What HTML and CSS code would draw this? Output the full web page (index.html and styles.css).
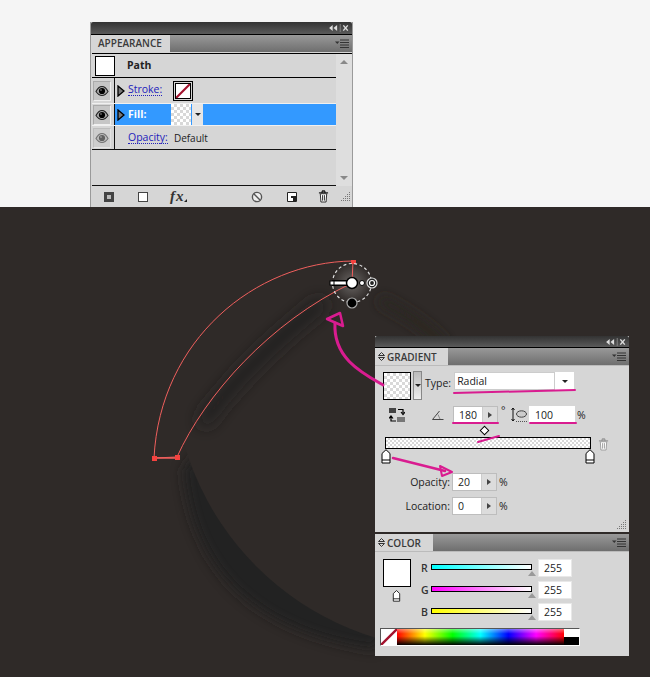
FILE: index.html
```html
<!DOCTYPE html>
<html lang="en">

<head>
    <meta charset="UTF-8">
    <meta name="viewport" content="width=device-width, initial-scale=1.0">
    <title>Appearance and gradient panels</title>
    <link rel="stylesheet" href="styles.css">
</head>

<body>
    <svg class="defs" width="0" height="0">
        <defs>
            <symbol id="eye" viewBox="0 0 14 12">
                <path d="M1 6.5 C3 2.5 5 1.5 7 1.5 C9 1.5 11 2.5 13 6.5 C11 9.5 9 10.5 7 10.5 C5 10.5 3 9.5 1 6.5Z" fill="#a8a8a8" stroke="#222" stroke-width="1.1" />
                <circle cx="7" cy="6" r="3.1" fill="#000" />
                <circle cx="6" cy="5" r="0.8" fill="#999" />
            </symbol>
            <symbol id="twirl" viewBox="0 0 8 12">
                <path d="M1 1 L7 6 L1 11Z" fill="#777" stroke="#000" stroke-width="1.3" />
            </symbol>
            <symbol id="collapse" viewBox="0 0 22 9">
                <path d="M5 1 L1 4.5 L5 8Z M10 1 L6 4.5 L10 8Z" fill="#ddd" />
                <path d="M13.5 0 V9" stroke="#888" />
                <path d="M17 1.5 L22 7.5 M22 1.5 L17 7.5" stroke="#ddd" stroke-width="1.6" />
            </symbol>
            <symbol id="menu" viewBox="0 0 14 9">
                <path d="M0 2.5 H4.5 L2.25 5Z" fill="#333" />
                <path d="M5 1 H14 M5 3.5 H14 M5 6 H14 M5 8.5 H14" stroke="#333" />
            </symbol>
            <symbol id="grip" viewBox="0 0 12 12">
                <path d="M10 1h1v1h-1z M8 3h1v1h-1z M10 3h1v1h-1z M6 5h1v1h-1z M8 5h1v1h-1z M10 5h1v1h-1z M4 7h1v1h-1z M6 7h1v1h-1z M8 7h1v1h-1z M10 7h1v1h-1z M2 9h1v1h-1z M4 9h1v1h-1z M6 9h1v1h-1z M8 9h1v1h-1z M10 9h1v1h-1z" fill="#777" />
            </symbol>
            <symbol id="trash" viewBox="0 0 12 14">
                <path d="M1 3 H11 M4 3 L5 1 H7 L8 3" fill="none" stroke="currentColor" stroke-width="1.5" />
                <path d="M2.5 4 L3.2 13 H8.8 L9.5 4Z" fill="#fff" stroke="currentColor" />
                <path d="M5 5.5 V11.5 M7 5.5 V11.5" stroke="currentColor" />
            </symbol>
            <symbol id="stop" viewBox="0 0 10 15">
                <path d="M5 .7 L9 4.5 V14 H1 V4.5Z" fill="#fff" stroke="#000" />
                <path d="M1 11 H9" stroke="#000" />
            </symbol>
            <symbol id="updown" viewBox="0 0 7 9">
                <path d="M3.5 .5 L6.5 3.5 H.5Z M3.5 8.5 L.5 5.5 H6.5Z" fill="none" stroke="#333" />
            </symbol>
            <symbol id="nofill" viewBox="0 0 10 10" preserveAspectRatio="none">
                <path d="M0 10 L10 0" stroke="#a3122e" stroke-width="1.5" />
            </symbol>
        </defs>
    </svg>

    <div class="top-strip">
        <section class="panel appearance">
            <div class="title-bar">
                <svg class="collapse-icon"><use href="#collapse" /></svg>
            </div>
            <div class="tab-row">
                <div class="tab">APPEARANCE</div>
                <svg class="menu-icon"><use href="#menu" /></svg>
            </div>
            <div class="app-body">
                <div class="app-list">
                    <div class="app-row path-row">
                        <div class="path-swatch"></div>
                        <strong class="path-name">Path</strong>
                    </div>
                    <div class="app-row attr-row stroke-row">
                        <div class="eye-cell"><svg class="eye"><use href="#eye" /></svg></div>
                        <svg class="twirl"><use href="#twirl" /></svg>
                        <a class="attr-link">Stroke:</a>
                        <div class="stroke-swatch"><svg><use href="#nofill" /></svg></div>
                    </div>
                    <div class="app-row attr-row fill-row">
                        <div class="eye-cell"><svg class="eye"><use href="#eye" /></svg></div>
                        <svg class="twirl"><use href="#twirl" /></svg>
                        <a class="attr-link fill-link">Fill:</a>
                        <div class="checker fill-swatch"></div>
                        <div class="fill-drop"><i class="down"></i></div>
                    </div>
                    <div class="app-row attr-row opacity-row">
                        <div class="eye-cell"><svg class="eye dim"><use href="#eye" /></svg></div>
                        <a class="attr-link no-twirl">Opacity:</a>
                        <span class="attr-value">Default</span>
                    </div>
                    <div class="app-empty"></div>
                </div>
                <div class="scroll">
                    <i class="scroll-up"></i>
                    <i class="scroll-down"></i>
                </div>
            </div>
            <div class="app-footer">
                <span class="tool-new"><i></i></span>
                <span class="tool-square"></span>
                <span class="tool-fx">fx<i></i></span>
                <svg class="tool-none" viewBox="0 0 12 12">
                    <circle cx="6" cy="6" r="4.6" fill="#eee" stroke="#555" stroke-width="1.4" />
                    <path d="M3 3 L9 9" stroke="#555" stroke-width="1.4" />
                </svg>
                <svg class="tool-dup" viewBox="0 0 10 10">
                    <path d="M.5 .5 H9.5 V9.500 H.5Z" fill="#fff" stroke="#222" />
                    <path d="M4 4 H9 V9 H6 V6 H4Z" fill="#222" />
                </svg>
                <svg class="tool-trash"><use href="#trash" /></svg>
                <svg class="grip"><use href="#grip" /></svg>
            </div>
        </section>
    </div>

    <div class="stage">
        <svg class="artwork" width="650" height="470" viewBox="0 207 650 470">
            <defs>
                <filter id="blur8" filterUnits="userSpaceOnUse" x="100" y="207" width="500" height="470">
                    <feGaussianBlur stdDeviation="8" />
                </filter>
                <filter id="blur6" filterUnits="userSpaceOnUse" x="100" y="207" width="500" height="470">
                    <feGaussianBlur stdDeviation="6" />
                </filter>
                <mask id="outside" maskUnits="userSpaceOnUse" x="0" y="207" width="650" height="470">
                    <rect x="0" y="207" width="650" height="470" fill="#fff" />
                    <circle cx="458" cy="365" r="285" fill="#000" />
                </mask>
                <radialGradient id="handle" cx="50%" cy="50%" r="50%">
                    <stop offset="0" stop-color="#6a6664" />
                    <stop offset="1" stop-color="#2f2a28" />
                </radialGradient>
            </defs>

            <!-- soft shadows behind the path -->
            <g mask="url(#outside)">
                <path d="M183 470 Q197 624 375 650 L400 600 L200 450Z" fill="#242120" filter="url(#blur6)" />
            </g>
            <path d="M205 420 C230 385 275 340 320 305" fill="none" stroke="#242120" stroke-width="13" stroke-linecap="round" filter="url(#blur8)" />
            <path d="M380 300 C405 312 428 328 445 346" fill="none" stroke="#292524" stroke-width="10" filter="url(#blur6)" />

            <circle cx="352" cy="283" r="20" fill="url(#handle)" />

            <path d="M154 458 C160 340 255 262 353 261 L352 283 C270 322 205 395 177 457Z" fill="none" stroke="#ef5f5d" stroke-width="1" />
            <path d="M154 458 H177" fill="none" stroke="#ef5f5d" stroke-width="1.500" />
            <rect x="152" y="456" width="5" height="5" fill="#f5423f" />
            <rect x="175" y="455" width="5" height="5" fill="#f5423f" />
            <rect x="351" y="260" width="5" height="4" fill="#f5423f" />

            <circle cx="352" cy="283" r="19.500" fill="none" stroke="#ddd" stroke-width="1.200" stroke-dasharray="3 2.500" />
            <rect x="332" y="280" width="20" height="6" fill="#000" />
            <rect x="332" y="281.500" width="20" height="3" fill="#fff" />
            <rect x="330" y="281" width="4" height="4" fill="#fff" stroke="#000" />
            <circle cx="352" cy="283" r="5.500" fill="#fff" stroke="#000" stroke-width="1.500" />
            <circle cx="362" cy="283" r="2.500" fill="#fff" stroke="#000" />
            <circle cx="372" cy="283" r="5" fill="#222" stroke="#ddd" stroke-width="1.200" />
            <circle cx="372" cy="283" r="2.500" fill="#222" stroke="#fff" stroke-width="1.200" />
            <circle cx="352" cy="303" r="5" fill="#000" stroke="#aaa" stroke-width="1.200" />
        </svg>

        <section class="panel gradient">
            <div class="title-bar">
                <svg class="collapse-icon"><use href="#collapse" /></svg>
            </div>
            <div class="tab-row">
                <div class="tab"><svg class="updown"><use href="#updown" /></svg>GRADIENT</div>
                <svg class="menu-icon"><use href="#menu" /></svg>
            </div>
            <div class="grad-body">
                <div class="grad-type">
                    <div class="checker big-swatch"></div>
                    <div class="swatch-drop"><i class="down"></i></div>
                    <label class="type-label">Type:</label>
                    <div class="select">
                        <span class="select-text">Radial</span>
                        <span class="select-arrow"><i class="down"></i></span>
                    </div>
                </div>
                <div class="grad-angle">
                    <svg class="swap" viewBox="0 0 16 15">
                        <rect x="0" y="0" width="7" height="5" fill="#444" />
                        <path d="M9 1.500 H14 V5 M12 4 L14 6.500 L16 4" fill="none" stroke="#000" stroke-width="1.200" />
                        <rect x="8" y="9" width="8" height="5" fill="#777" />
                        <path d="M7 13 H2 V9 M0 10.500 L2 8 L4 10.500" fill="none" stroke="#000" stroke-width="1.200" />
                    </svg>
                    <svg class="angle" viewBox="0 0 12 10">
                        <path d="M.5 9.500 H11.500 M.5 9.500 L7.500 1" fill="none" stroke="#444" />
                        <path d="M6 4.500 L8 9" stroke="#888" fill="none" />
                    </svg>
                    <div class="num with-step"><span>180</span><em class="step"><i></i></em></div>
                    <span class="degree">°</span>
                    <svg class="aspect" viewBox="0 0 16 16">
                        <path d="M2 1 V14 M.5 3 L2 1 L3.500 3 M.5 12 L2 14 L3.500 12" fill="none" stroke="#111" />
                        <ellipse cx="10.500" cy="7" rx="5" ry="3.200" fill="#ccc" stroke="#444" />
                        <path d="M5 14.500 H16" stroke="#555" stroke-dasharray="1 1" />
                    </svg>
                    <div class="num wide"><span>100</span></div>
                    <span class="unit">%</span>
                </div>
                <div class="midpoint"><i></i></div>
                <div class="grad-bar-row">
                    <div class="checker grad-bar"></div>
                    <svg class="bar-trash"><use href="#trash" /></svg>
                </div>
                <div class="stops">
                    <svg class="stop-icon"><use href="#stop" /></svg>
                    <svg class="stop-icon"><use href="#stop" /></svg>
                </div>
                <div class="field-row">
                    <label>Opacity:</label>
                    <div class="num with-step"><span>20</span><em class="step"><i></i></em></div>
                    <span class="unit">%</span>
                </div>
                <div class="field-row">
                    <label>Location:</label>
                    <div class="num with-step"><span>0</span><em class="step"><i></i></em></div>
                    <span class="unit">%</span>
                </div>
                <svg class="grip corner"><use href="#grip" /></svg>
            </div>
        </section>

        <section class="panel color">
            <div class="tab-row">
                <div class="tab"><svg class="updown"><use href="#updown" /></svg>COLOR</div>
                <svg class="menu-icon"><use href="#menu" /></svg>
            </div>
            <div class="color-body">
                <div class="color-top">
                    <div class="color-swatch-col">
                        <div class="color-swatch"></div>
                        <svg class="stop-icon"><use href="#stop" /></svg>
                    </div>
                    <div class="sliders">
                        <div class="slider-row">
                            <label>R</label>
                            <div class="slider"><div class="track track-r"></div><i class="thumb"></i></div>
                            <div class="num small"><span>255</span></div>
                        </div>
                        <div class="slider-row">
                            <label>G</label>
                            <div class="slider"><div class="track track-g"></div><i class="thumb"></i></div>
                            <div class="num small"><span>255</span></div>
                        </div>
                        <div class="slider-row">
                            <label>B</label>
                            <div class="slider"><div class="track track-b"></div><i class="thumb"></i></div>
                            <div class="num small"><span>255</span></div>
                        </div>
                    </div>
                </div>
                <div class="spectrum">
                    <div class="spec-none"><svg><use href="#nofill" /></svg></div>
                    <div class="spec-hues"></div>
                    <div class="spec-bw"></div>
                </div>
            </div>
        </section>
    </div>

    <!-- pink notes drawn over the panels -->
    <svg class="notes" width="650" height="677" viewBox="0 0 650 677">
        <g fill="none" stroke="#d91c90" stroke-linecap="round" stroke-linejoin="round">
            <path d="M383 385 C362 373 333 358 335 323" stroke-width="3" />
            <path d="M327 319 L340 313 L343 326Z" stroke-width="2.500" />
            <path d="M454 393 L575 390" stroke-width="2" />
            <path d="M453 423 L498 423" stroke-width="2" />
            <path d="M530 423 L576 423" stroke-width="2" />
            <path d="M478 442 L499 436" stroke-width="2" />
            <path d="M393 458 L445 471" stroke-width="2.500" />
            <path d="M440 466 L452 472 L442 476Z" stroke-width="2" />
        </g>
    </svg>
</body>

</html>
```

FILE: styles.css
```css
body {
    margin: 0;
    width: 650px;
    height: 677px;
    overflow: hidden;
    position: relative;
    background: #f5f5f5;
    font-family: "Open Sans", "Noto Sans", sans-serif;
    font-size: 10.5px;
    color: #222;
}

svg {
    display: block;
}

.defs {
    position: absolute;
}

.top-strip {
    height: 207px;
    box-sizing: border-box;
    padding: 22px 0 0 90px;
}

.stage {
    position: relative;
    height: 470px;
    background: #2f2a28;
}

.artwork {
    position: absolute;
    top: 0;
    left: 0;
}

.notes {
    position: absolute;
    top: 0;
    left: 0;
    pointer-events: none;
}

/* panels */
.panel {
    background: #d6d6d6;
    box-sizing: border-box;
}

.appearance {
    width: 263px;
    height: 185px;
    border: 1px solid #9a9a9a;
    border-top: none;
    border-bottom: none;
    display: flex;
    flex-direction: column;
}

.gradient {
    position: absolute;
    top: 129px;
    left: 375px;
    width: 254px;
    height: 196px;
    display: flex;
    flex-direction: column;
}

.color {
    position: absolute;
    top: 327px;
    left: 375px;
    width: 254px;
    height: 122px;
}

.title-bar {
    height: 12px;
    flex: none;
    background: linear-gradient(#333, #5a5a5a);
    border-bottom: 1px solid #000;
    border-radius: 2px 2px 0 0;
    display: flex;
    justify-content: flex-end;
    align-items: center;
    padding-right: 3px;
}

.gradient .title-bar {
    height: 11px;
}

.collapse-icon {
    width: 22px;
    height: 8px;
}

.tab-row {
    height: 17px;
    flex: none;
    background: linear-gradient(#999, #6e6e6e);
    display: flex;
    justify-content: space-between;
    align-items: center;
    padding-right: 3px;
}

.tab {
    height: 100%;
    box-sizing: border-box;
    background: #d6d6d6;
    display: flex;
    align-items: center;
    gap: 2px;
    padding-left: 3px;
    font-size: 10px;
    font-weight: 600;
    color: #3a3a3a;
}

.appearance .tab {
    width: 79px;
    padding-left: 7px;
    padding-bottom: 1px;
}

.gradient .tab {
    width: 73px;
}

.color .tab {
    width: 58px;
}

.menu-icon {
    width: 14px;
    height: 9px;
}

.updown {
    width: 7px;
    height: 9px;
}

/* appearance list */
.app-body {
    flex: 1;
    display: flex;
    border-top: 1px solid #000;
    margin-top: 1px;
    margin-left: 1px;
}

.app-list {
    flex: 1;
    display: flex;
    flex-direction: column;
}

.app-row {
    display: flex;
    align-items: center;
    flex: none;
}

.path-row {
    height: 23px;
    border-bottom: 1px solid #000;
}

.path-swatch {
    width: 18px;
    height: 18px;
    margin-left: 3px;
    background: #fff;
    border: 1px solid #000;
}

.path-name {
    margin: -1px 0 0 12px;
    font-weight: 700;
    font-size: 10.5px;
}

.eye-cell {
    width: 23px;
    height: 100%;
    margin-right: 2px;
    box-sizing: border-box;
    border-right: 1px solid #111;
    background: #d6d6d6;
    display: flex;
    align-items: center;
    flex: none;
}

.eye {
    width: 14px;
    height: 14px;
    padding: 2px 1px;
    margin-left: 1px;
    background: #c6c6c6;
    border: 1px solid;
    border-color: #aaa #f0f0f0 #f0f0f0 #aaa;
    box-sizing: content-box;
}

.eye.dim {
    opacity: 0.55;
}

.twirl {
    width: 8px;
    height: 12px;
    flex: none;
    margin-right: 3px;
}

.attr-link {
    color: #2222bb;
    border-bottom: 1px dotted #2222bb;
    line-height: 12px;
    margin-top: -2px;
}

.no-twirl {
    margin-left: 11px;
    margin-top: 0;
}

.stroke-row {
    height: 25px;
    border-bottom: 1px solid #f0f0f0;
}

.stroke-swatch {
    width: 14px;
    height: 14px;
    margin-left: 13px;
    border: 1px solid #000;
    outline: 1px solid #000;
    outline-offset: 1px;
    background: #fff;
}

.stroke-swatch svg {
    width: 14px;
    height: 14px;
}

.fill-row {
    height: 21px;
    background: #3399ff;
    border-bottom: 1px solid #f0f0f0;
}

.fill-link {
    color: #fff;
    border: none;
    font-weight: 700;
    width: 43px;
}

.checker {
    background-color: #fff;
    background-image: conic-gradient(#d8d8d8 25%, #fff 0 50%, #d8d8d8 0 75%, #fff 0);
    background-size: 6px 6px;
}

.fill-swatch {
    width: 20px;
    height: 21px;
}

.fill-drop {
    width: 11px;
    height: 21px;
    margin-left: 1px;
    background: #e6e6e6;
    display: flex;
    align-items: center;
    justify-content: center;
}

.down {
    display: block;
    width: 0;
    height: 0;
    border-top: 3px solid #222;
    border-left: 3.500px solid transparent;
    border-right: 3.500px solid transparent;
}

.opacity-row {
    height: 23px;
    border-bottom: 1px solid #111;
}

.attr-value {
    margin-left: 6px;
    font-size: 10px;
}

.app-empty {
    flex: 1;
    border-bottom: 1px solid #111;
}

.scroll {
    width: 16px;
    background: #dedede;
    position: relative;
}

.scroll-up,
.scroll-down {
    position: absolute;
    left: 4px;
    border: 4px solid transparent;
}

.scroll-up {
    top: 6px;
    border-bottom-color: #888;
    border-top: none;
}

.scroll-down {
    bottom: 6px;
    border-top-color: #888;
    border-bottom: none;
}

.app-footer {
    height: 21px;
    flex: none;
    margin-left: 1px;
    display: flex;
    align-items: center;
}

.tool-new {
    width: 10px;
    height: 10px;
    margin-left: 12px;
    background: #444;
    display: flex;
    align-items: center;
    justify-content: center;
}

.tool-new i {
    width: 4px;
    height: 4px;
    background: #bbb;
}

.tool-square {
    width: 8px;
    height: 8px;
    margin-left: 24px;
    border: 1px solid #444;
    background: #fff;
}

.tool-fx {
    margin-left: 22px;
    width: 19px;
    display: flex;
    align-items: flex-end;
    font-family: "Liberation Serif", serif;
    font-style: italic;
    font-weight: 700;
    font-size: 15px;
    letter-spacing: 1px;
    color: #333;
}

.tool-fx i {
    margin: 0 0 3px -1px;
    border-bottom: 3px solid #222;
    border-left: 3px solid transparent;
}

.tool-none {
    width: 12px;
    height: 12px;
    margin-left: 62px;
}

.tool-dup {
    width: 10px;
    height: 10px;
    margin-left: 24px;
}

.tool-trash {
    width: 11px;
    height: 13px;
    margin-left: 21px;
    color: #222;
}

.grip {
    width: 12px;
    height: 12px;
    margin-left: auto;
    margin-right: 1px;
}

/* gradient panel */
.grad-body {
    flex: 1;
    position: relative;
    padding: 5px 0 0 8px;
    border-top: 1px solid #bbb;
}

.grad-type {
    display: flex;
    align-items: center;
    height: 29px;
}

.big-swatch {
    width: 26px;
    height: 26px;
    border: 1px solid #000;
}

.swatch-drop {
    width: 9px;
    height: 29px;
    margin-left: 2px;
    background: linear-gradient(#bbb, #eee);
    border: 1px solid #888;
    box-sizing: border-box;
    display: flex;
    align-items: center;
    justify-content: center;
}

.type-label {
    margin: -5px 0 0 3px;
}

.select {
    width: 120px;
    height: 18px;
    margin: -9px 0 0 3px;
    background: #fff;
    display: flex;
}

.select-text {
    flex: 1;
    padding-left: 2px;
    line-height: 16px;
    border: 1px solid #ccc;
}

.select-arrow {
    width: 19px;
    display: flex;
    align-items: center;
    justify-content: center;
}

.grad-angle {
    display: flex;
    align-items: center;
    height: 18px;
    margin-top: 6px;
}

.swap {
    width: 16px;
    height: 15px;
    margin-left: 6px;
}

.angle {
    width: 12px;
    height: 10px;
    margin-left: 27px;
}

.num {
    height: 18px;
    box-sizing: border-box;
    background: #fff;
    border: 1px solid #bdbdbd;
    display: flex;
    align-items: center;
}

.num span {
    flex: 1;
    padding-left: 5px;
}

.with-step {
    width: 45px;
}

.grad-angle .with-step {
    margin-left: 9px;
}

.step {
    width: 15px;
    height: 100%;
    background: #dcdcdc;
    display: flex;
    align-items: center;
    justify-content: center;
    border-left: 1px solid #ccc;
    box-sizing: border-box;
}

.step i {
    display: block;
    border: 3.500px solid transparent;
    border-left: 4px solid #444;
    border-right: none;
}

.degree {
    width: 13px;
    margin-top: -10px;
    padding-left: 3px;
    box-sizing: border-box;
}

.aspect {
    width: 16px;
    height: 16px;
}

.wide {
    width: 46px;
    margin-left: 2px;
    border-color: #fff;
}

.unit {
    margin-left: 2px;
}

.midpoint {
    height: 9px;
    margin-top: 3px;
    padding-left: 98px;
}

.midpoint i {
    display: block;
    width: 5px;
    height: 5px;
    margin-top: 2px;
    transform: rotate(45deg);
    background: #fff;
    border: 1px solid #000;
}

.grad-bar-row {
    display: flex;
    align-items: center;
    margin-left: 2px;
    height: 13px;
}

.grad-bar {
    width: 206px;
    height: 12px;
    box-sizing: border-box;
    border: 1px solid #000;
    background-size: 4px 4px;
}

.bar-trash {
    width: 11px;
    height: 13px;
    margin: 3px 0 0 7px;
    color: #999;
}

.stops {
    display: flex;
    justify-content: space-between;
    width: 214px;
    margin-left: -2px;
}

.stop-icon {
    width: 10px;
    height: 15px;
}

.field-row {
    display: flex;
    align-items: center;
    height: 18px;
    margin: 9px 0 0 -8px;
}

.field-row label {
    width: 75px;
    padding-right: 2px;
    text-align: right;
}

.field-row + .field-row {
    margin-top: 6px;
}

.corner {
    position: absolute;
    right: 1px;
    bottom: 1px;
}

/* color panel */
.color-body {
    padding: 7px 0 0 5px;
    border-top: 1px solid #bbb;
}

.color-top {
    display: flex;
    height: 62px;
}

.color-swatch-col {
    width: 34px;
    padding-left: 3px;
    box-sizing: border-box;
    display: flex;
    flex-direction: column;
    align-items: flex-start;
}

.color-swatch {
    width: 28px;
    height: 28px;
    box-sizing: border-box;
    background: #fff;
    border: 1px solid #000;
    flex: none;
}

.color-swatch-col .stop-icon {
    width: 9px;
    height: 12px;
    margin: 3px 0 0 9px;
}

.sliders {
    display: flex;
    flex-direction: column;
    gap: 4px;
    margin-left: 7px;
}

.slider-row {
    display: flex;
    align-items: center;
    height: 18px;
}

.slider-row label {
    width: 10px;
    font-weight: 600;
    color: #333;
}

.slider {
    position: relative;
    width: 101px;
    height: 18px;
}

.track {
    position: absolute;
    top: 5px;
    left: 0;
    right: 0;
    height: 4px;
    border: 1px solid #000;
}

.track-r {
    background: linear-gradient(to right, #00ffff, #fff);
}

.track-g {
    background: linear-gradient(to right, #ff00ff, #fff);
}

.track-b {
    background: linear-gradient(to right, #ffff00, #fff);
}

.thumb {
    position: absolute;
    right: -4px;
    top: 12px;
    border: 4.500px solid transparent;
    border-bottom: 5px solid #999;
    border-top: none;
}

.num.small {
    width: 34px;
    margin-left: 6px;
    border-color: #e8e8e8;
}

.spectrum {
    display: flex;
    width: 200px;
    height: 18px;
    box-sizing: border-box;
    border: 1px solid;
    border-color: #555 #fff #fff #555;
    margin-top: 7px;
}

.spec-none {
    width: 16px;
    background: #fff;
}

.spec-none svg {
    width: 16px;
    height: 16px;
}

.spec-hues {
    flex: 1;
    background:
        linear-gradient(#fff6, #fff0 30%, #0000 45%, #000),
        linear-gradient(to right, #ff0000, #ffff00, #00ff00, #00ffff, #0000ff, #ff00ff, #ff0000);
}

.spec-bw {
    width: 15px;
    background: linear-gradient(#fff 50%, #000 50%);
}
```
